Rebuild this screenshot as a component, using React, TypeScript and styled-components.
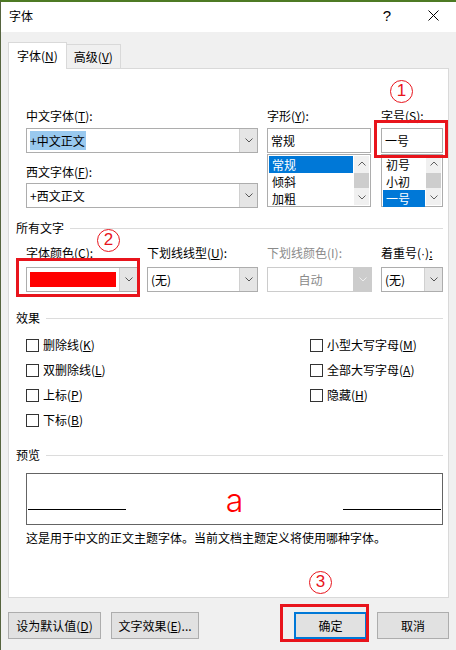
import styled, { createGlobalStyle } from 'styled-components';

const GlobalStyle = createGlobalStyle`
  html, body {
    margin: 0;
    padding: 0;
    background: #f0f0f0;
  }
  body {
    font-family: "Noto Sans CJK SC", "Noto Sans", sans-serif;
    font-size: 12px;
    color: #000;
  }
`;

const Window = styled.div`
  position: relative;
  box-sizing: border-box;
  width: 456px;
  height: 650px;
  background: #f0f0f0;
  border-left: 1px solid #56643f;
  border-top: 2px solid #4d7a24;
  display: flex;
  flex-direction: column;
  overflow: hidden;
`;

const TitleBar = styled.div`
  height: 30px;
  background: #fff;
  display: flex;
  align-items: center;
  padding-left: 8px;
  padding-bottom: 3px;
  box-sizing: border-box;
`;

const Title = styled.div`
  flex: 1;
  line-height: 16px;
`;

const TitleButton = styled.div`
  width: 46px;
  height: 100%;
  display: flex;
  align-items: center;
  justify-content: center;
  font-family: "Liberation Sans", sans-serif;
  font-size: 15px;
`;

const Body = styled.div`
  padding: 10px 7px 0 7px;
`;

const Tabs = styled.div`
  display: flex;
  align-items: flex-end;
  position: relative;
  z-index: 1;
  margin-bottom: -1px;
`;

const Tab = styled.div<{ $active?: boolean }>`
  box-sizing: border-box;
  height: ${(p) => (p.$active ? 27 : 25)}px;
  padding: 0 ${(p) => (p.$active ? 8 : 7)}px;
  display: flex;
  align-items: center;
  background: ${(p) => (p.$active ? '#fff' : '#f0f0f0')};
  border: 1px solid #d9d9d9;
  border-bottom: ${(p) => (p.$active ? 'none' : '1px solid #d9d9d9')};
  border-left: ${(p) => (p.$active ? '1px solid #d9d9d9' : 'none')};
  line-height: 16px;
`;

const Panel = styled.div`
  box-sizing: border-box;
  width: 441px;
  height: 530px;
  background: #fff;
  border: 1px solid #d9d9d9;
  padding: 0 5px 0 7px;
`;

const TopSection = styled.div`
  display: flex;
  margin: 39px 0 0 10px;
`;

const Column = styled.div<{ $w: number; $gap?: number }>`
  width: ${(p) => p.$w}px;
  margin-right: ${(p) => p.$gap ?? 0}px;
  display: flex;
  flex-direction: column;
`;

const Label = styled.div<{ $top?: number; $disabled?: boolean }>`
  line-height: 16px;
  height: 16px;
  margin-top: ${(p) => p.$top ?? 0}px;
  margin-bottom: 4px;
  color: ${(p) => (p.$disabled ? '#8a8a8a' : '#000')};
  white-space: nowrap;
`;

const Dot = styled.span`
  font-family: "Liberation Sans", sans-serif;
`;

const ComboBox = styled.div<{ $disabled?: boolean }>`
  box-sizing: border-box;
  height: 25px;
  border: 1px solid ${(p) => (p.$disabled ? '#cccccc' : '#adadad')};
  background: #fff;
  display: flex;
  align-items: stretch;
`;

const ComboText = styled.div<{ $center?: boolean; $disabled?: boolean }>`
  flex: 1;
  display: flex;
  align-items: center;
  justify-content: ${(p) => (p.$center ? 'center' : 'flex-start')};
  padding-left: ${(p) => (p.$center ? 0 : 3)}px;
  color: ${(p) => (p.$disabled ? '#8a8a8a' : '#000')};
  line-height: 16px;
  white-space: nowrap;
`;

const Highlight = styled.span`
  background: #99c9ef;
  line-height: 19px;
  padding: 0 1px 0 0;
`;

const DropButton = styled.div<{ $disabled?: boolean }>`
  width: 17px;
  background: ${(p) => (p.$disabled ? '#cccccc' : '#e5e5e5')};
  border-left: 1px solid ${(p) => (p.$disabled ? '#cccccc' : '#d0d0d0')};
  display: flex;
  align-items: center;
  justify-content: center;
`;

const Swatch = styled.div`
  flex: 1;
  background: #ff0000;
  margin: 4px 3px 4px 3px;
`;

const TextBox = styled.div`
  box-sizing: border-box;
  height: 25px;
  border: 1px solid #adadad;
  background: #fff;
  padding-left: 3px;
  display: flex;
  align-items: center;
  line-height: 16px;
`;

const ListBox = styled.div`
  box-sizing: border-box;
  height: 53px;
  margin-top: 1px;
  border: 1px solid #adadad;
  background: #fff;
  display: flex;
  padding: 1px;
`;

const ListItems = styled.div`
  flex: 1;
  display: flex;
  flex-direction: column;
`;

const ListItem = styled.div<{ $selected?: boolean }>`
  height: 17px;
  line-height: 17px;
  padding-left: 3px;
  background: ${(p) => (p.$selected ? '#0078d7' : 'transparent')};
  color: ${(p) => (p.$selected ? '#fff' : '#000')};
`;

const ScrollBar = styled.div`
  width: 15px;
  margin-left: 1px;
  background: #f0f0f0;
  display: flex;
  flex-direction: column;
  justify-content: space-between;
  align-items: center;
`;

const ScrollArrow = styled.div`
  height: 15px;
  width: 15px;
  display: flex;
  align-items: center;
  justify-content: center;
`;

const ScrollThumb = styled.div`
  width: 15px;
  height: 15px;
  background: #cdcdcd;
`;

const SectionHeader = styled.div<{ $top: number }>`
  display: flex;
  align-items: center;
  height: 16px;
  line-height: 16px;
  margin-top: ${(p) => p.$top}px;
  &::after {
    content: '';
    flex: 1;
    height: 1px;
    background: #dcdcdc;
    margin-left: 6px;
  }
`;

const FieldRow = styled.div`
  display: grid;
  grid-template-columns: 112px 111px 105px 62px;
  column-gap: 9px;
  margin: 9px 0 0 10px;
`;

const Field = styled.div`
  display: flex;
  flex-direction: column;
`;

const FieldLabel = styled(Label)`
  margin-bottom: 6px;
`;

const EffectsGrid = styled.div`
  display: grid;
  grid-template-columns: 284px auto;
  grid-template-rows: repeat(4, 16px);
  grid-auto-flow: column;
  row-gap: 9px;
  margin: 11px 0 0 10px;
`;

const CheckRow = styled.label`
  display: flex;
  align-items: center;
  gap: 4px;
  line-height: 16px;
  white-space: nowrap;
`;

const CheckBox = styled.span`
  box-sizing: border-box;
  width: 13px;
  height: 13px;
  border: 1px solid #333;
  background: #fff;
`;

const PreviewBox = styled.div`
  box-sizing: border-box;
  height: 52px;
  margin: 10px 0 0 10px;
  border: 1px solid #646464;
  display: flex;
  align-items: flex-end;
  justify-content: space-between;
  padding: 0 1px 14px 1px;
`;

const PreviewLine = styled.div`
  width: 98px;
  height: 1px;
  background: #000;
`;

const PreviewSample = styled.div`
  font-family: "Inter", "Liberation Sans", sans-serif;
  font-weight: 300;
  font-size: 32px;
  line-height: 24px;
  color: #ff0000;
  margin-bottom: -3px;
`;

const Description = styled.div`
  margin: 5px 0 0 10px;
  line-height: 16px;
`;

const ButtonBar = styled.div`
  display: flex;
  justify-content: space-between;
  margin-top: 14px;
`;

const ButtonGroup = styled.div`
  display: flex;
  gap: 10px;
`;

const Button = styled.div<{ $w: number; $default?: boolean }>`
  box-sizing: border-box;
  width: ${(p) => p.$w}px;
  height: 27px;
  background: #e1e1e1;
  border: ${(p) => (p.$default ? '2px solid #0078d7' : '1px solid #adadad')};
  display: flex;
  align-items: center;
  justify-content: center;
  line-height: 16px;
  white-space: nowrap;
`;

const Annotation = styled.div<{ $x: number; $y: number; $w: number; $h: number }>`
  position: absolute;
  left: ${(p) => p.$x}px;
  top: ${(p) => p.$y}px;
  width: ${(p) => p.$w}px;
  height: ${(p) => p.$h}px;
  box-sizing: border-box;
  border: 3px solid #e8141c;
  pointer-events: none;
`;

const Marker = styled.div<{ $x: number; $y: number }>`
  position: absolute;
  left: ${(p) => p.$x}px;
  top: ${(p) => p.$y}px;
  width: 23px;
  height: 23px;
  box-sizing: border-box;
  border: 1.5px solid #e8141c;
  border-radius: 50%;
  color: #e8141c;
  font-family: "Liberation Sans", sans-serif;
  font-size: 17px;
  line-height: 20px;
  text-align: center;
`;

const Chevron = ({ color = '#555', up = false }: { color?: string; up?: boolean }) => (
  <svg width="8" height="5" viewBox="0 0 8 5">
    <polyline
      points={up ? '0.5,4.5 4,1 7.5,4.5' : '0.5,0.5 4,4 7.5,0.5'}
      fill="none"
      stroke={color}
      strokeWidth="1"
    />
  </svg>
);

const Combo = ({ children, disabled, center }: { children?: React.ReactNode; disabled?: boolean; center?: boolean }) => (
  <ComboBox $disabled={disabled}>
    <ComboText $center={center} $disabled={disabled}>{children}</ComboText>
    <DropButton $disabled={disabled}>
      <Chevron color={disabled ? '#eeeeee' : '#555'} />
    </DropButton>
  </ComboBox>
);

const List = ({ items, selected }: { items: string[]; selected: number }) => (
  <ListBox>
    <ListItems>
      {items.map((it, i) => (
        <ListItem key={it} $selected={i === selected}>{it}</ListItem>
      ))}
    </ListItems>
    <ScrollBar>
      <ScrollArrow><Chevron color="#606060" up /></ScrollArrow>
      <ScrollThumb />
      <ScrollArrow><Chevron color="#606060" /></ScrollArrow>
    </ScrollBar>
  </ListBox>
);

const effectsLeft = [
  ['删除线', 'K'],
  ['双删除线', 'L'],
  ['上标', 'P'],
  ['下标', 'B'],
];
const effectsRight = [
  ['小型大写字母', 'M'],
  ['全部大写字母', 'A'],
  ['隐藏', 'H'],
];

const App = () => {
  return (
    <>
      <GlobalStyle />
      <Window>
        <TitleBar>
          <Title>字体</Title>
          <TitleButton>?</TitleButton>
          <TitleButton>
            <svg width="11" height="11" viewBox="0 0 11 11">
              <path d="M0.5 0.5 L10.5 10.5 M10.5 0.5 L0.5 10.5" stroke="#000" strokeWidth="1" />
            </svg>
          </TitleButton>
        </TitleBar>
        <Body>
          <Tabs>
            <Tab $active>字体(<u>N</u>)</Tab>
            <Tab>高级(<u>V</u>)</Tab>
          </Tabs>
          <Panel>
            <TopSection>
              <Column $w={232} $gap={9}>
                <Label>中文字体(<u>T</u>):</Label>
                <Combo><Highlight>+中文正文</Highlight></Combo>
                <Label $top={11} style={{ marginBottom: 3 }}>西文字体(<u>F</u>):</Label>
                <Combo>+西文正文</Combo>
              </Column>
              <Column $w={104} $gap={10}>
                <Label>字形(<u>Y</u>):</Label>
                <TextBox>常规</TextBox>
                <List items={['常规', '倾斜', '加粗']} selected={0} />
              </Column>
              <Column $w={62}>
                <Label>字号(<u>S</u>):</Label>
                <TextBox>一号</TextBox>
                <List items={['初号', '小初', '一号']} selected={2} />
              </Column>
            </TopSection>

            <SectionHeader $top={12}>所有文字</SectionHeader>
            <FieldRow>
              <Field>
                <FieldLabel>字体颜色(<u>C</u>):</FieldLabel>
                <ComboBox>
                  <Swatch />
                  <DropButton><Chevron /></DropButton>
                </ComboBox>
              </Field>
              <Field>
                <FieldLabel>下划线线型(<u>U</u>):</FieldLabel>
                <Combo>(无)</Combo>
              </Field>
              <Field>
                <FieldLabel $disabled>下划线颜色(I):</FieldLabel>
                <Combo disabled center>自动</Combo>
              </Field>
              <Field>
                <FieldLabel>着重号(<Dot>·</Dot>)<u>:</u></FieldLabel>
                <Combo>(无)</Combo>
              </Field>
            </FieldRow>

            <SectionHeader $top={18}>效果</SectionHeader>
            <EffectsGrid>
              {[...effectsLeft, ...effectsRight].map(([name, key]) => (
                <CheckRow key={name}>
                  <CheckBox />
                  <span>{name}(<u>{key}</u>)</span>
                </CheckRow>
              ))}
            </EffectsGrid>

            <SectionHeader $top={19}>预览</SectionHeader>
            <PreviewBox>
              <PreviewLine />
              <PreviewSample>a</PreviewSample>
              <PreviewLine />
            </PreviewBox>
            <Description>这是用于中文的正文主题字体。当前文档主题定义将使用哪种字体。</Description>
          </Panel>

          <ButtonBar>
            <ButtonGroup>
              <Button $w={93}>设为默认值(<u>D</u>)</Button>
              <Button $w={88}>文字效果(<u>E</u>)...</Button>
            </ButtonGroup>
            <ButtonGroup>
              <Button $w={73} $default>确定</Button>
              <Button $w={72}>取消</Button>
            </ButtonGroup>
          </ButtonBar>
        </Body>

        <Annotation $x={373} $y={118} $w={74} $h={38} />
        <Annotation $x={15} $y={256} $w={124} $h={39} />
        <Annotation $x={279} $y={602} $w={89} $h={38} />
        <Marker $x={389} $y={78}>1</Marker>
        <Marker $x={96} $y={227}>2</Marker>
        <Marker $x={308} $y={569}>3</Marker>
      </Window>
    </>
  );
};

export default App;
